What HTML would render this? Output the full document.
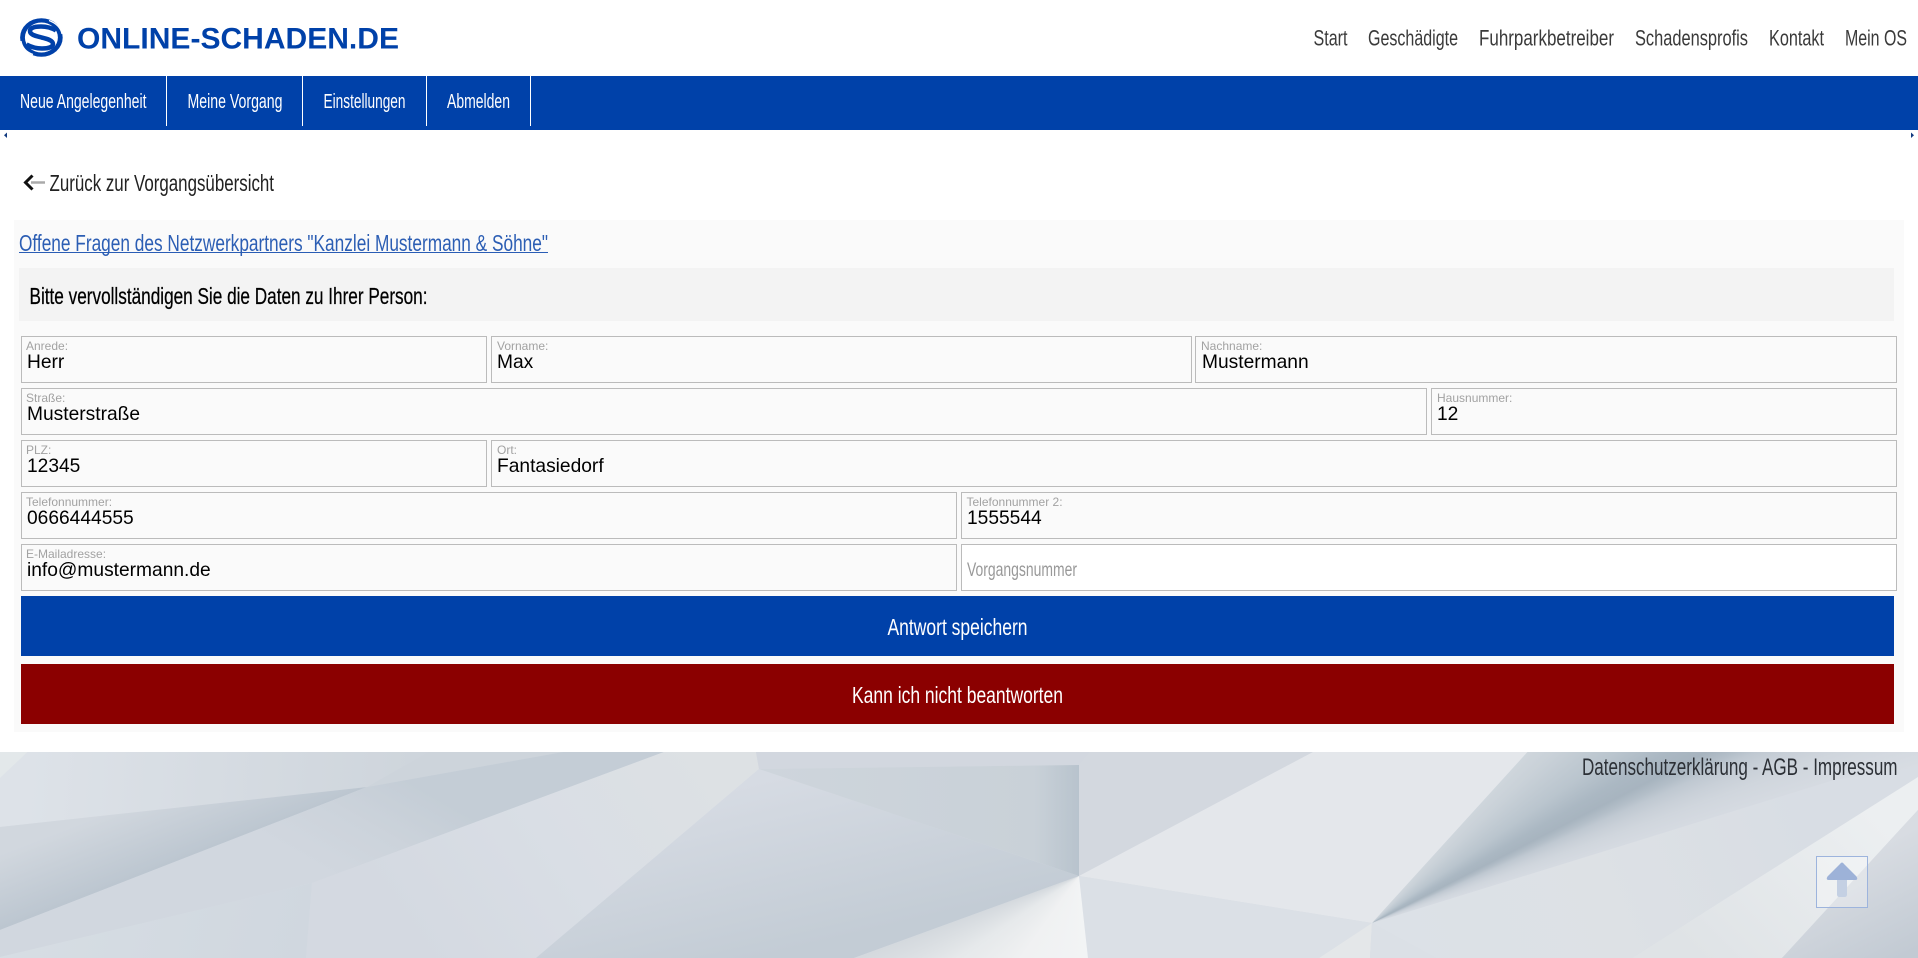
<!DOCTYPE html>
<html lang="de">
<head>
<meta charset="utf-8">
<title>Online-Schaden.de</title>
<style>
html,body{margin:0;padding:0;width:1918px;height:958px;overflow:hidden;background:#fff}
body{position:relative;font-family:"Liberation Sans",Arial,sans-serif}
.abs,.f{position:absolute;box-sizing:border-box}
.f{height:47px;border:1px solid #bbb;background:#fafafa}
svg{position:absolute;left:0;top:0}
.c{font-family:"Liberation Sans",Arial,sans-serif}
.l{font-size:12px;fill:#a2a2a2}
.v{font-size:19.2px;fill:#000}
.fan{position:absolute;left:0;top:0;width:1918px;height:958px}
</style>
</head>
<body>
<svg width="1918" height="958" viewBox="0 0 1918 958">
<defs>
<linearGradient id="g1" gradientUnits="userSpaceOnUse" x1="30" y1="752" x2="470" y2="790"><stop offset="0" stop-color="#dde2e8"/><stop offset="1" stop-color="#ccd3da"/></linearGradient>
<linearGradient id="g2" gradientUnits="userSpaceOnUse" x1="155" y1="795" x2="180" y2="860"><stop offset="0" stop-color="#d1d7de"/><stop offset="1" stop-color="#bcc6d0"/></linearGradient>
<linearGradient id="g3" gradientUnits="userSpaceOnUse" x1="400" y1="775" x2="340" y2="880"><stop offset="0" stop-color="#c4cdd6"/><stop offset=".5" stop-color="#ccd3db"/><stop offset="1" stop-color="#d1d7df"/></linearGradient>
<linearGradient id="g4" gradientUnits="userSpaceOnUse" x1="700" y1="760" x2="420" y2="950"><stop offset="0" stop-color="#dde1e4"/><stop offset=".5" stop-color="#d9dee5"/><stop offset="1" stop-color="#d4d9e1"/></linearGradient>
<linearGradient id="g5" gradientUnits="userSpaceOnUse" x1="720" y1="790" x2="760" y2="958"><stop offset="0" stop-color="#d6dbe3"/><stop offset="1" stop-color="#c3ccd5"/></linearGradient>
<linearGradient id="g6" gradientUnits="userSpaceOnUse" x1="760" y1="800" x2="1079" y2="800"><stop offset="0" stop-color="#ced5dc"/><stop offset=".86" stop-color="#c9d1d8"/><stop offset="1" stop-color="#b8c3cd"/></linearGradient>
<linearGradient id="g9" gradientUnits="userSpaceOnUse" x1="1850" y1="860" x2="1900" y2="958"><stop offset="0" stop-color="#d8dce2"/><stop offset="1" stop-color="#c2cad3"/></linearGradient>
<linearGradient id="g10" gradientUnits="userSpaceOnUse" x1="1700" y1="958" x2="1860" y2="800"><stop offset="0" stop-color="#dfe3e6"/><stop offset="1" stop-color="#eceff1"/></linearGradient>
<linearGradient id="g11" gradientUnits="userSpaceOnUse" x1="1400" y1="950" x2="1800" y2="800"><stop offset="0" stop-color="#dce1e7"/><stop offset=".5" stop-color="#dde1e5"/><stop offset="1" stop-color="#d8dde4"/></linearGradient>
<linearGradient id="g12" gradientUnits="userSpaceOnUse" x1="0" y1="880" x2="300" y2="958"><stop offset="0" stop-color="#d7dee4"/><stop offset="1" stop-color="#d0d7df"/></linearGradient>
</defs>
<rect x="0" y="752" width="1918" height="206" fill="#d6dbe2"/>
<polygon points="0,752 563,752 367,787 0,827" fill="url(#g1)"/>
<polygon points="429,752 563,752 367,787" fill="#cdd4db"/>
<polygon points="0,752 27.5,752 0,778" fill="#e3e8ea"/>
<polygon points="0,827 367,787 0,930" fill="url(#g2)"/>
<polygon points="0,930 367,787 563,752 664,752 312,883 0,957" fill="url(#g3)"/>
<polygon points="664,752 756,752 759,769 536,958 306,958 312,883" fill="url(#g4)"/>
<polygon points="0,957 312,883 306,958 0,958" fill="url(#g12)"/>
<polygon points="759,769 1079,876 854,958 536,958" fill="url(#g5)"/>
<polygon points="756,752 1090,752 1079,765 759,769" fill="#d2d7df"/>
<polygon points="759,769 1079,765 1079,876" fill="url(#g6)"/>
<polygon points="1079,765 1090,752 1313,752 1079,876" fill="#d3d8df"/>
<polygon points="1313,752 1527.5,752 1372,923 1079,876" fill="#e4e7eb"/>
<polygon points="1079,876 1372,923 1319,958 1088,958" fill="#dbe0e6"/>
<polygon points="1319,958 1372,923 1370,958" fill="#e4e7e9"/>
<polygon points="1370,958 1372,923 1436,958" fill="#dbe0e6"/>
<polygon points="1372,923 1834,780 1918,767 1918,777 1632,958 1436,958" fill="url(#g11)"/>
<polygon points="1918,777 1632,958 1782,958 1918,810" fill="url(#g10)"/>
<polygon points="1918,810 1782,958 1918,958" fill="url(#g9)"/>
</svg>

<div class="fan" style="background:conic-gradient(from 0deg at 1372px 923px,#cfd6dc 0deg,#cfd6dc 42.2deg,#c9d1d8 46.9deg,#bac5ce 55deg,#abb8c3 60deg,#a7b4bf 63deg,#b3bec8 64.7deg,#bfc8d1 66deg,#c9d0d8 68deg,#d0d6dd 70deg,#d5dae1 72.6deg,#d8dde3 74deg,#d8dde3 360deg);clip-path:polygon(1527.5px 752px,1918px 752px,1918px 767px,1834px 780px,1372px 923px)"></div>
<div class="fan" style="background:conic-gradient(from 0deg at 1079px 876px,#f2f4f5 0deg,#f2f4f5 173deg,#f0f1f2 215deg,#e6e9eb 236deg,#d3d8dd 250.5deg,#d3d8dd 360deg);clip-path:polygon(1079px 876px,1088px 958px,854px 958px)"></div>

<div class="abs" style="left:0;top:0;width:1918px;height:752px;background:#fff"></div>
<div class="abs" style="left:0;top:76px;width:1918px;height:54px;background:#0041a9"></div>
<div class="abs" style="left:166px;top:76px;width:1px;height:50px;background:#fff"></div>
<div class="abs" style="left:302px;top:76px;width:1px;height:50px;background:#fff"></div>
<div class="abs" style="left:426px;top:76px;width:1px;height:50px;background:#fff"></div>
<div class="abs" style="left:530px;top:76px;width:1px;height:50px;background:#fff"></div>

<div class="abs" style="left:14px;top:220px;width:1890px;height:512px;background:#fafafa"></div>
<div class="abs" style="left:19px;top:268px;width:1875px;height:53px;background:#f3f3f3"></div>

<div class="f" style="left:21px;top:336px;width:466px"></div>
<div class="f" style="left:491px;top:336px;width:701px"></div>
<div class="f" style="left:1195px;top:336px;width:702px"></div>
<div class="f" style="left:21px;top:388px;width:1406px"></div>
<div class="f" style="left:1431px;top:388px;width:466px"></div>
<div class="f" style="left:21px;top:440px;width:466px"></div>
<div class="f" style="left:491px;top:440px;width:1406px"></div>
<div class="f" style="left:21px;top:492px;width:936px"></div>
<div class="f" style="left:961px;top:492px;width:936px"></div>
<div class="f" style="left:21px;top:544px;width:936px"></div>
<div class="f" style="left:961px;top:544px;width:936px;background:#fff"></div>

<div class="abs" style="left:21px;top:596px;width:1873px;height:60px;background:#0041a9"></div>
<div class="abs" style="left:21px;top:664px;width:1873px;height:60px;background:#8b0000"></div>

<div class="abs" style="left:1816px;top:856px;width:52px;height:52px;border:1px solid #9db4dd;background:rgba(255,255,255,.3)"></div>

<svg width="1918" height="958" viewBox="0 0 1918 958">
<!-- logo -->
<ellipse cx="41.4" cy="37.5" rx="21.3" ry="19.3" fill="#0041a9"/>
<ellipse cx="41.4" cy="37.5" rx="16.5" ry="15" fill="#fff"/>
<path d="M56 30.500 C51 27.500 46 26.500 41 26.500 C34 26.500 30 28 30 31 C30 35 36 36 41.500 37.500 C48 39 53 40.500 53 44 C53 47 48.500 48.500 42 48.500 C36 48.500 31 47 26.500 44.500" fill="none" stroke="#0041a9" stroke-width="4.500"/>
<path d="M49 20.500 C56 23 61 28 62 34" fill="none" stroke="#fff" stroke-width="1.2"/>
<path d="M21 41 C22 47 26 52 33 54.500" fill="none" stroke="#fff" stroke-width="1.2"/>
<text class="c" x="77" y="48.300" font-size="29.500" font-weight="bold" fill="#0041a9" textLength="322" lengthAdjust="spacingAndGlyphs">ONLINE-SCHADEN.DE</text>

<!-- top nav -->
<g class="c" font-size="22" fill="#3a3a3a">
<text x="1313.500" y="45.700" textLength="34" lengthAdjust="spacingAndGlyphs">Start</text>
<text x="1368" y="45.700" textLength="90" lengthAdjust="spacingAndGlyphs">Geschädigte</text>
<text x="1479" y="45.700" textLength="135" lengthAdjust="spacingAndGlyphs">Fuhrparkbetreiber</text>
<text x="1635" y="45.700" textLength="113" lengthAdjust="spacingAndGlyphs">Schadensprofis</text>
<text x="1769" y="45.700" textLength="55" lengthAdjust="spacingAndGlyphs">Kontakt</text>
<text x="1845" y="45.700" textLength="62" lengthAdjust="spacingAndGlyphs">Mein OS</text>
</g>

<!-- blue nav -->
<g class="c" font-size="20" fill="#fff">
<text x="20" y="108" textLength="126.500" lengthAdjust="spacingAndGlyphs">Neue Angelegenheit</text>
<text x="187.500" y="108" textLength="95" lengthAdjust="spacingAndGlyphs">Meine Vorgang</text>
<text x="323.500" y="108" textLength="82" lengthAdjust="spacingAndGlyphs">Einstellungen</text>
<text x="447" y="108" textLength="63" lengthAdjust="spacingAndGlyphs">Abmelden</text>
</g>

<!-- carets -->
<polygon points="7,132.500 7,138 4,135.300" fill="#123a80"/>
<polygon points="1911,132.500 1911,138 1914,135.300" fill="#123a80"/>

<!-- back link -->
<path d="M31 182.500 H45" stroke="#aaa" stroke-width="2.500" fill="none"/>
<path d="M32.500 175.500 L25.500 182.500 L32.500 189.500" stroke="#111" stroke-width="3" fill="none"/>
<text class="c" x="49.500" y="191" font-size="23" fill="#222" textLength="224.500" lengthAdjust="spacingAndGlyphs">Zurück zur Vorgangsübersicht</text>

<!-- link -->
<text class="c" x="19" y="251" font-size="23" fill="#2c5eb4" textLength="529" lengthAdjust="spacingAndGlyphs">Offene Fragen des Netzwerkpartners "Kanzlei Mustermann &amp; Söhne"</text>
<rect x="19" y="252" width="529" height="1" fill="#2a5db5"/>

<!-- heading -->
<text class="c" x="29.500" y="304" font-size="23" fill="#000" stroke="#000" stroke-width=".25" textLength="398" lengthAdjust="spacingAndGlyphs">Bitte vervollständigen Sie die Daten zu Ihrer Person:</text>

<!-- fields -->
<text class="l" x="26" y="350">Anrede:</text><text class="v" x="27" y="368">Herr</text>
<text class="l" x="497" y="350">Vorname:</text><text class="v" x="497" y="368">Max</text>
<text class="l" x="1201" y="350">Nachname:</text><text class="v" x="1202" y="368">Mustermann</text>
<text class="l" x="26" y="402">Straße:</text><text class="v" x="27" y="420">Musterstraße</text>
<text class="l" x="1437" y="402">Hausnummer:</text><text class="v" x="1437" y="420">12</text>
<text class="l" x="26" y="454">PLZ:</text><text class="v" x="27" y="472">12345</text>
<text class="l" x="497" y="454">Ort:</text><text class="v" x="497" y="472">Fantasiedorf</text>
<text class="l" x="26" y="506">Telefonnummer:</text><text class="v" x="27" y="524">0666444555</text>
<text class="l" x="966.500" y="506">Telefonnummer 2:</text><text class="v" x="967" y="524">1555544</text>
<text class="l" x="26" y="558">E-Mailadresse:</text><text class="v" x="27" y="576">info@mustermann.de</text>
<text class="c" x="967" y="576" font-size="19.500" fill="#999" textLength="110" lengthAdjust="spacingAndGlyphs">Vorgangsnummer</text>

<!-- buttons -->
<text class="c" x="887.500" y="635" font-size="23" fill="#fff" textLength="140" lengthAdjust="spacingAndGlyphs">Antwort speichern</text>
<text class="c" x="852" y="703" font-size="23" fill="#fff" textLength="211" lengthAdjust="spacingAndGlyphs">Kann ich nicht beantworten</text>

<!-- footer -->
<text class="c" x="1582" y="775" font-size="24" fill="#2c3036" textLength="315.500" lengthAdjust="spacingAndGlyphs">Datenschutzerklärung - AGB - Impressum</text>

<!-- up arrow -->
<path d="M1842 862.500 Q1843 862.500 1844 864 L1856.500 876.500 Q1858.500 880 1855.500 880 H1828.500 Q1825.500 880 1827.500 876.500 L1840 864 Q1841 862.500 1842 862.500 Z" fill="#9db2d8"/>
<path d="M1837 880 H1847 V894.500 Q1847 897 1844.500 897 H1839.500 Q1837 897 1837 894.500 Z" fill="#c4d0e3"/>
</svg>
</body>
</html>
